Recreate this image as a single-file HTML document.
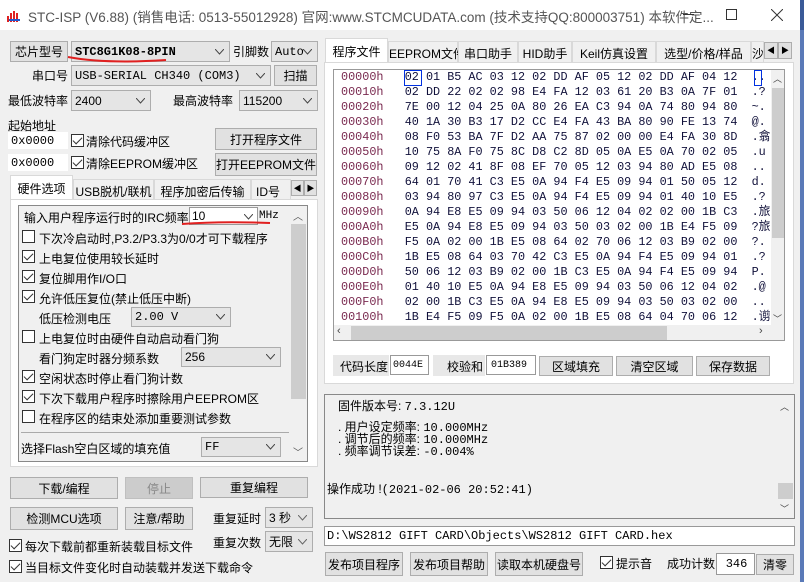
<!DOCTYPE html>
<html><head><meta charset="utf-8"><style>
*{box-sizing:border-box;margin:0;padding:0}
body{width:804px;height:582px;overflow:hidden;background:#f0f0f0;font-family:"Liberation Sans","Noto Sans CJK SC",sans-serif;font-size:12px;color:#000;position:relative}
.a{position:absolute;white-space:nowrap}
.b{position:absolute;background:#e1e1e1;border:1px solid #adadad;text-align:center;white-space:nowrap;display:flex;align-items:center;justify-content:center}
.c{position:absolute;background:#e5e5e5;border:1px solid #adadad;white-space:nowrap;padding-left:3px;display:flex;align-items:center}
.c svg{position:absolute;right:5px;top:50%;margin-top:-3px}
.i{position:absolute;background:#fff;border:1px solid #7a7a7a;white-space:nowrap;display:flex;align-items:center;padding-left:2px}
.m{font-family:"Liberation Mono","Noto Sans CJK SC",monospace;font-size:12px}
.k{position:absolute;width:13px;height:13px;border:1px solid #333;background:#fff}
.k.on::after{content:"";position:absolute;left:3px;top:0px;width:4px;height:8px;border:solid #333;border-width:0 1.5px 1.5px 0;transform:rotate(45deg)}
.t{position:absolute;border:1px solid #d9d9d9;border-bottom:none;background:#f0f0f0;text-align:center;white-space:nowrap;padding-top:3px}
.hx{position:absolute;left:341px;font-family:"Liberation Mono",monospace;font-size:11.8px;white-space:pre;color:#10103a;line-height:15px}
.hx span{color:#7a2a50}
</style></head><body>
<!-- title -->
<div class="a" style="left:0;top:0;width:804px;height:30px;background:#fff"></div>
<svg class="a" style="left:7px;top:7px" width="14" height="16"><path d="M1 15V9M4 15V6M7 15V4M10 15V6" stroke="#d22" stroke-width="2"/><path d="M2 13h11" stroke="#2255cc" stroke-width="2"/></svg>
<div class="a" style="left:28px;top:6px;color:#555;font-size:13.5px">STC-ISP (V6.88) (销售电话: 0513-55012928) 官网:www.STCMCUDATA.com (技术支持QQ:800003751) 本软件定...</div>
<div class="a" style="left:683px;top:14px;width:11px;height:1px;background:#333"></div>
<div class="a" style="left:726px;top:9px;width:11px;height:11px;border:1px solid #333"></div>
<svg class="a" style="left:771px;top:9px" width="12" height="12"><path d="M0 0L12 12M12 0L0 12" stroke="#333"/></svg>
<div class="a" style="left:800px;top:0;width:4px;height:582px;background:#5a7ab8"></div>
<div class="a" style="left:800px;top:0;width:4px;height:30px;background:#3a5a98"></div>

<!-- left top -->
<div class="b" style="left:10px;top:41px;width:58px;height:21px">芯片型号</div>
<div class="c m" style="left:71px;top:41px;width:159px;height:21px;font-weight:bold">STC8G1K08-8PIN<svg width="9" height="6"><path d="M0 0l4.5 5L9 0" fill="none" stroke="#444"/></svg></div>
<svg class="a" style="left:66px;top:55px" width="104" height="10"><path d="M2 2Q40 9 100 5" fill="none" stroke="#e02020" stroke-width="2"/></svg>
<div class="a" style="left:233px;top:43px">引脚数</div>
<div class="c m" style="left:271px;top:41px;width:47px;height:21px">Auto<svg width="9" height="6"><path d="M0 0l4.5 5L9 0" fill="none" stroke="#444"/></svg></div>
<div class="a" style="left:32px;top:67px">串口号</div>
<div class="c m" style="left:71px;top:65px;width:200px;height:21px">USB-SERIAL CH340 (COM3)<svg width="9" height="6"><path d="M0 0l4.5 5L9 0" fill="none" stroke="#444"/></svg></div>
<div class="b" style="left:274px;top:65px;width:43px;height:21px">扫描</div>
<div class="a" style="left:8px;top:92px">最低波特率</div>
<div class="c" style="left:71px;top:90px;width:80px;height:21px">2400<svg width="9" height="6"><path d="M0 0l4.5 5L9 0" fill="none" stroke="#444"/></svg></div>
<div class="a" style="left:173px;top:92px">最高波特率</div>
<div class="c" style="left:239px;top:90px;width:79px;height:21px">115200<svg width="9" height="6"><path d="M0 0l4.5 5L9 0" fill="none" stroke="#444"/></svg></div>
<div class="a" style="left:8px;top:117px">起始地址</div>
<div class="i m" style="left:8px;top:132px;width:60px;height:17px;border-color:#fff">0x0000</div>
<div class="k on" style="left:71px;top:134px"></div><div class="a" style="left:86px;top:133px">清除代码缓冲区</div>
<div class="b" style="left:215px;top:128px;width:102px;height:22px">打开程序文件</div>
<div class="i m" style="left:8px;top:154px;width:60px;height:17px;border-color:#fff">0x0000</div>
<div class="k on" style="left:71px;top:156px"></div><div class="a" style="left:86px;top:155px">清除EEPROM缓冲区</div>
<div class="b" style="left:215px;top:153px;width:102px;height:23px">打开EEPROM文件</div>

<!-- left tabs -->
<div class="t" style="left:10px;top:175px;width:63px;height:25px;background:#fff;padding-top:4px">硬件选项</div>
<div class="t" style="left:73px;top:179px;width:81px;height:20px">USB脱机/联机</div>
<div class="t" style="left:154px;top:179px;width:97px;height:20px">程序加密后传输</div>
<div class="t" style="left:251px;top:179px;width:40px;height:20px;overflow:hidden;text-align:left;padding-left:4px">ID号</div>
<div class="b" style="left:291px;top:180px;width:13px;height:16px;font-size:8px">◀</div>
<div class="b" style="left:304px;top:180px;width:13px;height:16px;font-size:8px">▶</div>
<div class="a" style="left:10px;top:199px;width:308px;height:268px;border:1px solid #d9d9d9;background:#fff"></div>
<div class="a" style="left:18px;top:205px;width:290px;height:257px;border:1px solid #888;background:#f0f0f0"></div>
<div class="a" style="left:290px;top:206px;width:17px;height:255px;background:#f0f0f0"></div>
<div class="a" style="left:291px;top:224px;width:15px;height:175px;background:#cdcdcd"></div>
<div class="a" style="left:293px;top:208px;font-size:10px;color:#555">︿</div>
<div class="a" style="left:293px;top:444px;font-size:10px;color:#555">﹀</div>
<div class="a" style="left:24px;top:209px">输入用户程序运行时的IRC频率</div>
<div class="i" style="left:189px;top:207px;width:69px;height:18px;border-color:#999">10<svg style="position:absolute;right:4px;top:6px" width="9" height="6"><path d="M0 0l4.5 5L9 0" fill="none" stroke="#444"/></svg></div>
<div class="a m" style="left:259px;top:210px;font-size:11px">MHz</div>
<svg class="a" style="left:180px;top:219px" width="92" height="8"><path d="M2 5Q40 2 90 4" fill="none" stroke="#e02020" stroke-width="2"/></svg>
<div class="k" style="left:22px;top:230px"></div><div class="a" style="left:39px;top:230px">下次冷启动时,P3.2/P3.3为0/0才可下载程序</div>
<div class="k on" style="left:22px;top:250px"></div><div class="a" style="left:39px;top:250px">上电复位使用较长延时</div>
<div class="k on" style="left:22px;top:270px"></div><div class="a" style="left:39px;top:270px">复位脚用作I/O口</div>
<div class="k on" style="left:22px;top:290px"></div><div class="a" style="left:39px;top:290px">允许低压复位(禁止低压中断)</div>
<div class="a" style="left:39px;top:310px">低压检测电压</div>
<div class="c m" style="left:131px;top:307px;width:100px;height:20px">2.00 V<svg width="9" height="6"><path d="M0 0l4.5 5L9 0" fill="none" stroke="#444"/></svg></div>
<div class="k" style="left:22px;top:330px"></div><div class="a" style="left:39px;top:330px">上电复位时由硬件自动启动看门狗</div>
<div class="a" style="left:39px;top:350px">看门狗定时器分频系数</div>
<div class="c" style="left:181px;top:347px;width:100px;height:20px">256<svg width="9" height="6"><path d="M0 0l4.5 5L9 0" fill="none" stroke="#444"/></svg></div>
<div class="k on" style="left:22px;top:370px"></div><div class="a" style="left:39px;top:370px">空闲状态时停止看门狗计数</div>
<div class="k on" style="left:22px;top:390px"></div><div class="a" style="left:39px;top:390px">下次下载用户程序时擦除用户EEPROM区</div>
<div class="k" style="left:22px;top:410px"></div><div class="a" style="left:39px;top:410px">在程序区的结束处添加重要测试参数</div>
<div class="a" style="left:21px;top:432px;width:268px;height:1px;background:#aaa"></div>
<div class="a" style="left:21px;top:440px">选择Flash空白区域的填充值</div>
<div class="c m" style="left:201px;top:437px;width:80px;height:20px">FF<svg width="9" height="6"><path d="M0 0l4.5 5L9 0" fill="none" stroke="#444"/></svg></div>

<!-- left bottom -->
<div class="b" style="left:10px;top:477px;width:108px;height:22px">下载/编程</div>
<div class="b" style="left:125px;top:477px;width:68px;height:22px;background:#ccc;border-color:#bfbfbf;color:#888">停止</div>
<div class="b" style="left:200px;top:477px;width:108px;height:21px">重复编程</div>
<div class="b" style="left:10px;top:507px;width:108px;height:23px">检测MCU选项</div>
<div class="b" style="left:125px;top:507px;width:68px;height:23px">注意/帮助</div>
<div class="a" style="left:213px;top:510px">重复延时</div>
<div class="c" style="left:265px;top:507px;width:48px;height:21px">3 秒<svg width="9" height="6"><path d="M0 0l4.5 5L9 0" fill="none" stroke="#666"/></svg></div>
<div class="a" style="left:213px;top:534px">重复次数</div>
<div class="c" style="left:265px;top:531px;width:48px;height:21px">无限<svg width="9" height="6"><path d="M0 0l4.5 5L9 0" fill="none" stroke="#666"/></svg></div>
<div class="k on" style="left:9px;top:539px"></div><div class="a" style="left:25px;top:538px">每次下载前都重新装载目标文件</div>
<div class="k on" style="left:9px;top:560px"></div><div class="a" style="left:25px;top:559px">当目标文件变化时自动装载并发送下载命令</div>

<!-- right tabs -->
<div class="t" style="left:325px;top:38px;width:63px;height:25px;background:#fff;padding-top:4px">程序文件</div>
<div class="t" style="left:388px;top:41px;width:70px;height:21px">EEPROM文件</div>
<div class="t" style="left:458px;top:41px;width:60px;height:21px">串口助手</div>
<div class="t" style="left:518px;top:41px;width:54px;height:21px">HID助手</div>
<div class="t" style="left:572px;top:41px;width:84px;height:21px">Keil仿真设置</div>
<div class="t" style="left:656px;top:41px;width:95px;height:21px">选型/价格/样品</div>
<div class="t" style="left:751px;top:41px;width:13px;height:21px;overflow:hidden">沙</div>
<div class="b" style="left:764px;top:42px;width:14px;height:17px;font-size:8px">◀</div>
<div class="b" style="left:778px;top:42px;width:14px;height:17px;font-size:8px">▶</div>
<div class="a" style="left:324px;top:62px;width:470px;height:322px;border:1px solid #d9d9d9;background:#fff"></div>
<div class="a" style="left:333px;top:69px;width:452px;height:272px;border:1px solid #999;background:#fff;overflow:hidden">
<div class="hx" style="top:0px;left:7px;width:430px;height:255px;overflow:hidden"><span>00000h</span>   02 01 B5 AC 03 12 02 DD AF 05 12 02 DD AF 04 12  ..
<span>00010h</span>   02 DD 22 02 02 98 E4 FA 12 03 61 20 B3 0A 7F 01  .?
<span>00020h</span>   7E 00 12 04 25 0A 80 26 EA C3 94 0A 74 80 94 80  ~.
<span>00030h</span>   40 1A 30 B3 17 D2 CC E4 FA 43 BA 80 90 FE 13 74  @.
<span>00040h</span>   08 F0 53 BA 7F D2 AA 75 87 02 00 00 E4 FA 30 8D  .翕
<span>00050h</span>   10 75 8A F0 75 8C D8 C2 8D 05 0A E5 0A 70 02 05  .u
<span>00060h</span>   09 12 02 41 8F 08 EF 70 05 12 03 94 80 AD E5 08  ..
<span>00070h</span>   64 01 70 41 C3 E5 0A 94 F4 E5 09 94 01 50 05 12  d.
<span>00080h</span>   03 94 80 97 C3 E5 0A 94 F4 E5 09 94 01 40 10 E5  .?
<span>00090h</span>   0A 94 E8 E5 09 94 03 50 06 12 04 02 02 00 1B C3  .旅
<span>000A0h</span>   E5 0A 94 E8 E5 09 94 03 50 03 02 00 1B E4 F5 09  ?旅
<span>000B0h</span>   F5 0A 02 00 1B E5 08 64 02 70 06 12 03 B9 02 00  ?.
<span>000C0h</span>   1B E5 08 64 03 70 42 C3 E5 0A 94 F4 E5 09 94 01  .?
<span>000D0h</span>   50 06 12 03 B9 02 00 1B C3 E5 0A 94 F4 E5 09 94  P.
<span>000E0h</span>   01 40 10 E5 0A 94 E8 E5 09 94 03 50 06 12 04 02  .@
<span>000F0h</span>   02 00 1B C3 E5 0A 94 E8 E5 09 94 03 50 03 02 00  ..
<span>00100h</span>   1B E4 F5 09 F5 0A 02 00 1B E5 08 64 04 70 06 12  .谫</div>
<div class="a" style="left:70px;top:0px;width:18px;height:16px;border:1.5px solid #0030e0"></div>
<div class="a" style="left:420px;top:0px;width:8px;height:16px;border:1.5px solid #0030e0"></div>
<div class="a" style="left:437px;top:0;width:14px;height:255px;background:#f0f0f0"></div>
<div class="a" style="left:438px;top:18px;width:12px;height:150px;background:#cdcdcd"></div>
<div class="a" style="left:439px;top:2px;font-size:9px;color:#444">︿</div>
<div class="a" style="left:439px;top:242px;font-size:9px;color:#444">﹀</div>
<div class="a" style="left:0;top:255px;width:451px;height:16px;background:#f0f0f0"></div>
<div class="a" style="left:17px;top:256px;width:316px;height:14px;background:#cdcdcd"></div>
<div class="a" style="left:3px;top:255px;font-size:11px;color:#444">‹</div>
<div class="a" style="left:425px;top:255px;font-size:11px;color:#444">›</div>
</div>
<div class="a" style="left:333px;top:355px;width:56px;height:21px;background:#e8e8e8;padding:3px 0 0 7px">代码长度</div>
<div class="i m" style="left:390px;top:355px;width:39px;height:20px;font-size:10px;border-color:#999">0044E</div>
<div class="a" style="left:433px;top:355px;width:52px;height:21px;background:#e8e8e8;padding:3px 0 0 14px">校验和</div>
<div class="i m" style="left:486px;top:355px;width:50px;height:20px;font-size:10px;border-color:#999;padding-left:4px">01B389</div>
<div class="b" style="left:539px;top:356px;width:74px;height:20px">区域填充</div>
<div class="b" style="left:616px;top:356px;width:77px;height:20px">清空区域</div>
<div class="b" style="left:696px;top:356px;width:74px;height:20px">保存数据</div>

<!-- log -->
<div class="a" style="left:324px;top:394px;width:471px;height:125px;border:1px solid #888;background:#f0f0f0"></div>
<div class="a" style="left:782px;top:395px;width:12px;height:123px;background:#f0f0f0"></div>
<div class="a" style="left:778px;top:483px;width:15px;height:16px;background:#cdcdcd"></div>
<div class="a" style="left:780px;top:400px;font-size:9px;color:#444">︿</div>
<div class="a" style="left:780px;top:502px;font-size:9px;color:#444">﹀</div>
<div class="a" style="left:338px;top:397px">固件版本号: <span class="m">7.3.12U</span></div>
<div class="a" style="left:338px;top:422px;line-height:11px;font-size:12px">.  用户设定频率: <span class="m">10.000MHz</span><br>.  调节后的频率: <span class="m">10.000MHz</span><br>.  频率调节误差: <span class="m">-0.004%</span></div>
<div class="a" style="left:327px;top:480px">操作成功 !<span class="m">(2021-02-06 20:52:41)</span></div>
<div class="i m" style="left:324px;top:526px;width:471px;height:20px;border-color:#999;padding-left:2px">D:\WS2812 GIFT CARD\Objects\WS2812 GIFT CARD.hex</div>
<div class="b" style="left:325px;top:552px;width:78px;height:24px">发布项目程序</div>
<div class="b" style="left:410px;top:552px;width:78px;height:24px">发布项目帮助</div>
<div class="b" style="left:495px;top:552px;width:88px;height:24px">读取本机硬盘号</div>
<div class="k on" style="left:600px;top:556px"></div><div class="a" style="left:616px;top:555px">提示音</div>
<div class="a" style="left:667px;top:555px">成功计数</div>
<div class="i m" style="left:716px;top:553px;width:39px;height:22px;border-color:#999;justify-content:center">346</div>
<div class="b" style="left:756px;top:554px;width:38px;height:21px">清零</div>
</body></html>
